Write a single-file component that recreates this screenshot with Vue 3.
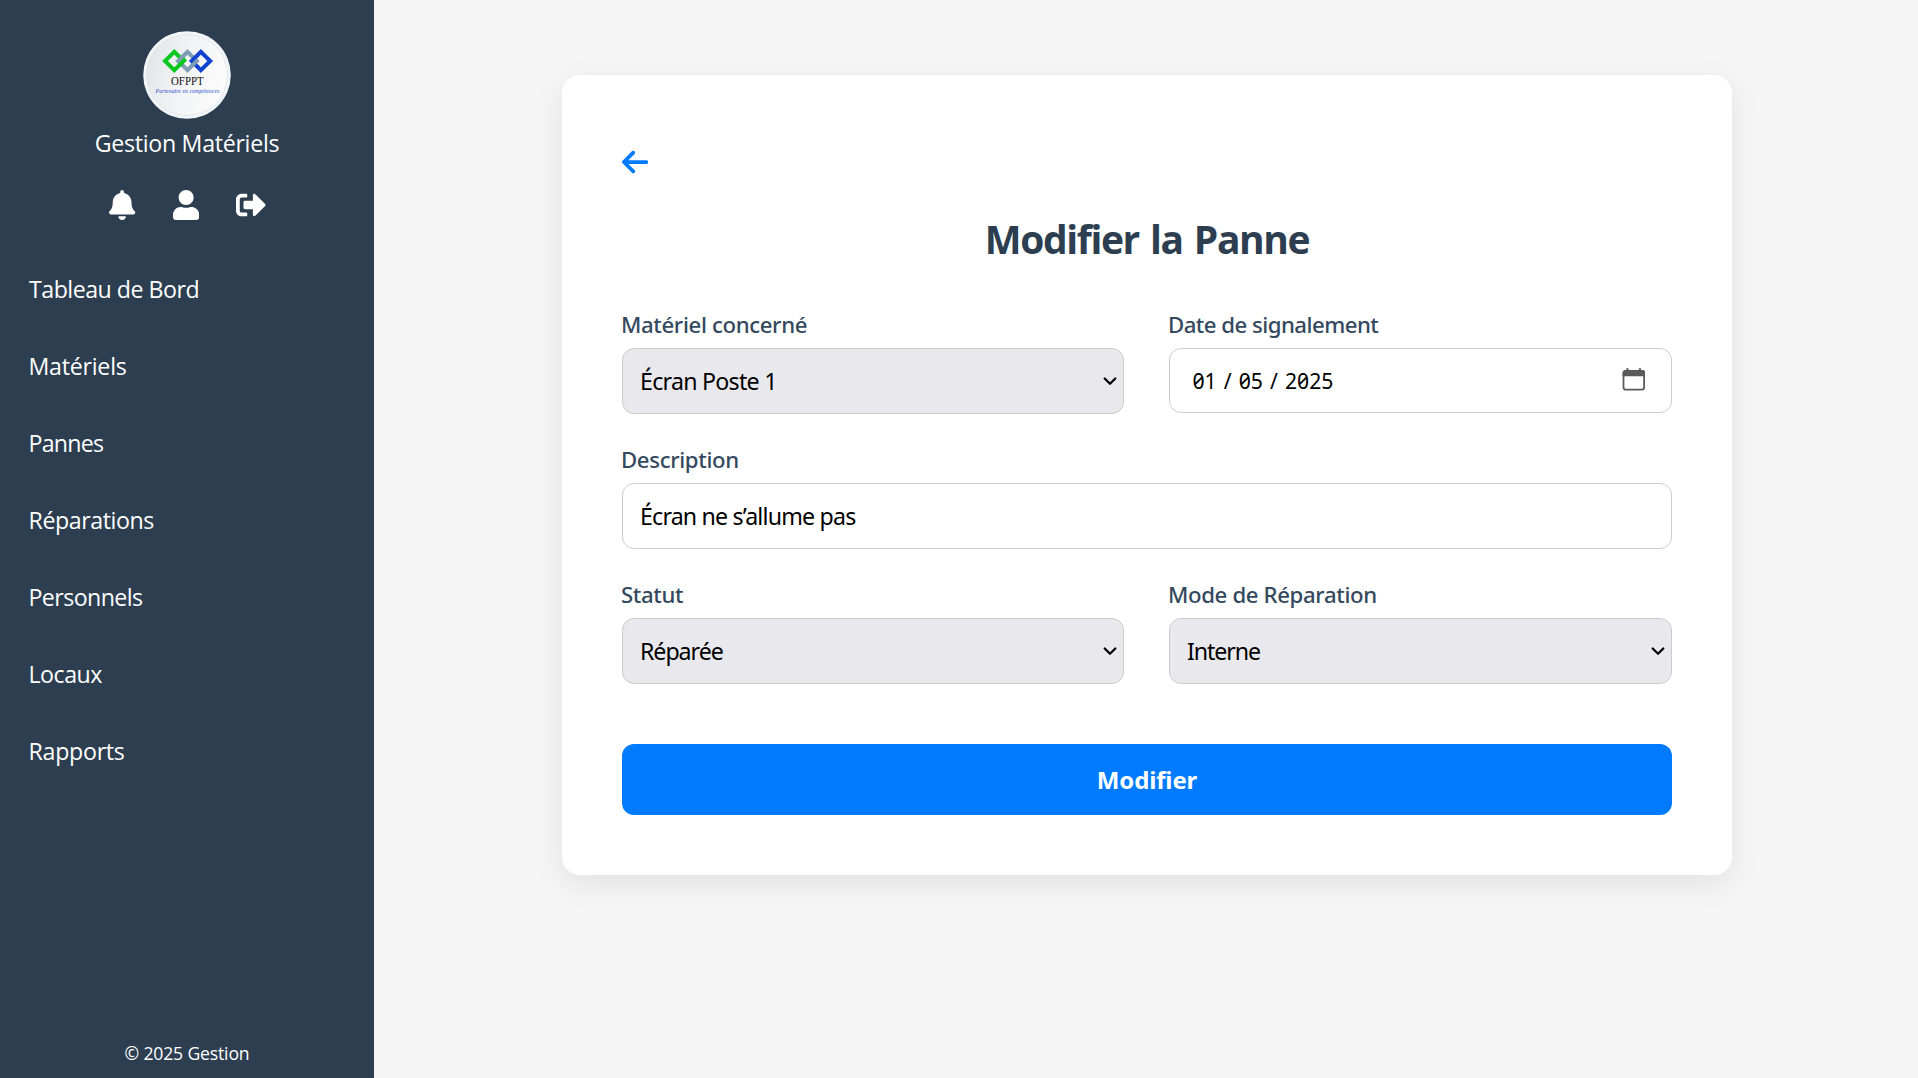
<script setup>
import { ref } from 'vue'

const links = [
  { label: 'Tableau de Bord', tracking: -0.5 },
  { label: 'Matériels', tracking: -0.25 },
  { label: 'Pannes', tracking: -0.75 },
  { label: 'Réparations', tracking: -0.42 },
  { label: 'Personnels', tracking: -0.58 },
  { label: 'Locaux', tracking: -0.5 },
  { label: 'Rapports', tracking: -0.27 },
]
const description = ref('Écran ne s’allume pas')
</script>

<template>
  <div class="app">
    <aside class="sidebar">
      <svg class="logo" viewBox="0 0 88 88">
        <defs>
          <linearGradient id="disc" x1="0" y1="0" x2="1" y2="0.3">
            <stop offset="0" stop-color="#dfe3e6" />
            <stop offset="0.5" stop-color="#f1f2f4" />
            <stop offset="1" stop-color="#fbfbfb" />
          </linearGradient>
        </defs>
        <circle cx="44" cy="44" r="43.8" fill="#f3f6f8" />
        <circle cx="44" cy="44" r="40.5" fill="url(#disc)" stroke="#dde3e7" stroke-width="0.8" />
        <g fill="none" stroke-width="4">
          <path d="M44.5 20.8L53.7 30L44.5 39.2L35.3 30Z" stroke="#7f9db5" />
          <path d="M38.5 28L31.3 20.8L22 30L31.3 39.2L41.6 28.9" stroke="#0bc81e" />
          <path d="M48.7 30L57.9 20.8L67.2 30L57.9 39.2Z" stroke="#1044d0" />
          <path d="M42.5 22.8L35.3 30L38 32.7" stroke="#7f9db5" />
          <path d="M36 34.5L42.6 27.9" stroke="#0bc81e" />
          <path d="M48 35.7L54.6 29.1" stroke="#7f9db5" />
        </g>
        <text x="44.3" y="53.7" class="logo-name" textLength="32.5" lengthAdjust="spacingAndGlyphs">OFPPT</text>
        <text x="44.6" y="62" class="logo-motto" textLength="64" lengthAdjust="spacingAndGlyphs">Partenaire en compétences</text>
      </svg>
      <div class="brand">Gestion Matériels</div>
      <div class="actions">
        <svg width="26.25" height="30" viewBox="0 0 448 512"><path d="M224 512c35.32 0 63.97-28.65 63.97-64H160.03c0 35.35 28.65 64 63.97 64zm215.39-149.71c-19.32-20.76-55.47-51.99-55.47-154.29 0-77.7-54.48-139.9-127.94-155.16V32c0-17.67-14.32-32-31.98-32s-31.98 14.33-31.98 32v20.84C118.56 68.1 64.08 130.3 64.08 208c0 102.3-36.15 133.53-55.47 154.29-6 6.45-8.66 14.16-8.61 21.71.11 16.4 12.98 32 32.1 32h383.8c19.12 0 32-15.6 32.1-32 .05-7.55-2.61-15.27-8.61-21.71z" /></svg>
        <svg width="26.25" height="30" viewBox="0 0 448 512"><path d="M224 256c70.7 0 128-57.3 128-128S294.7 0 224 0 96 57.3 96 128s57.3 128 128 128zm89.6 32h-16.7c-22.2 10.2-46.9 16-72.9 16s-50.6-5.8-72.9-16h-16.7C60.2 288 0 348.2 0 422.4V464c0 26.5 21.5 48 48 48h352c26.5 0 48-21.5 48-48v-41.6c0-74.2-60.2-134.4-134.4-134.4z" /></svg>
        <svg width="30" height="30" viewBox="0 0 512 512"><path d="M497 273L329 441c-15 15-41 4.5-41-17v-96H152c-13.3 0-24-10.7-24-24v-96c0-13.3 10.7-24 24-24h136V88c0-21.4 25.9-32 41-17l168 168c9.3 9.4 9.3 24.6 0 34zM192 436v-40c0-6.6-5.4-12-12-12H96c-17.7 0-32-14.3-32-32V160c0-17.7 14.3-32 32-32h84c6.6 0 12-5.4 12-12V76c0-6.6-5.4-12-12-12H96c-53 0-96 43-96 96v192c0 53 43 96 96 96h84c6.6 0 12-5.4 12-12z" /></svg>
      </div>
      <nav class="menu">
        <a v-for="link in links" :key="link.label" :style="{ letterSpacing: link.tracking + 'px' }">{{ link.label }}</a>
      </nav>
      <footer class="copyright">© 2025 Gestion</footer>
    </aside>

    <main class="content">
      <section class="card">
        <svg class="back" width="26.25" height="30" viewBox="0 0 448 512"><path d="M9.4 233.4c-12.5 12.5-12.5 32.8 0 45.3l160 160c12.5 12.5 32.8 12.5 45.3 0s12.5-32.8 0-45.3L109.2 288 416 288c17.7 0 32-14.3 32-32s-14.3-32-32-32l-306.7 0L214.6 118.6c12.5-12.5 12.5-32.8 0-45.3s-32.8-12.5-45.3 0l-160 160z" /></svg>
        <h1>Modifier la Panne</h1>
        <form class="form" @submit.prevent>
          <div class="field">
            <label>Matériel concerné</label>
            <div class="select-box">
              <select class="control poste"><option>Écran Poste 1</option></select>
              <svg class="chevron" width="14" height="9" viewBox="0 0 14 9"><path d="M1.7 1.5L7 6.8L12.3 1.5" /></svg>
            </div>
          </div>
          <div class="field">
            <label class="tight">Date de signalement</label>
            <div class="control date">
              <span>01</span><i>/</i><span>05</span><i>/</i><span>2025</span>
              <svg class="calendar" width="24" height="23" viewBox="0 0 24 23">
                <rect x="1.5" y="3" width="20.6" height="18.6" rx="2" fill="none" stroke="#5b5b5b" stroke-width="1.8" />
                <path d="M0.6 8.3V4.5Q0.6 2 3 2H20.5Q23 2 23 4.5V8.3ZM4.3 0.2H6.5V3H4.3ZM16.8 0.2H19V3H16.8Z" fill="#5b5b5b" />
              </svg>
            </div>
          </div>
          <div class="field wide">
            <label>Description</label>
            <input v-model="description" class="control desc" type="text" spellcheck="false" />
          </div>
          <div class="field">
            <label>Statut</label>
            <div class="select-box">
              <select class="control statut"><option>Réparée</option></select>
              <svg class="chevron" width="14" height="9" viewBox="0 0 14 9"><path d="M1.7 1.5L7 6.8L12.3 1.5" /></svg>
            </div>
          </div>
          <div class="field">
            <label>Mode de Réparation</label>
            <div class="select-box">
              <select class="control mode"><option>Interne</option></select>
              <svg class="chevron" width="14" height="9" viewBox="0 0 14 9"><path d="M1.7 1.5L7 6.8L12.3 1.5" /></svg>
            </div>
          </div>
          <button class="submit wide" type="submit">Modifier</button>
        </form>
      </section>
    </main>
  </div>
</template>

<style>
body {
  margin: 0;
}
</style>

<style scoped>
* {
  box-sizing: border-box;
}
.app {
  display: flex;
  height: 1078px;
  overflow: hidden;
  background: #f5f5f5;
  font-family: "Open Sans", "Noto Sans", sans-serif;
}
.sidebar {
  display: flex;
  flex: none;
  flex-direction: column;
  align-items: center;
  width: 374px;
  padding: 31px 0 9px;
  background: #2c3e50;
  color: #fff;
}
.logo {
  flex: none;
  width: 88px;
  height: 88px;
}
.logo-name {
  fill: #111;
  font: 11.5px "Liberation Serif", serif;
  text-anchor: middle;
}
.logo-motto {
  fill: #2f52cf;
  font: italic 6.2px "Liberation Serif", serif;
  text-anchor: middle;
}
.brand {
  margin-top: 8px;
  font-size: 23.2px;
  line-height: 32px;
  letter-spacing: -0.3px;
}
.actions {
  display: flex;
  gap: 37px;
  margin-top: 31px;
  padding-left: 1px;
  fill: #fff;
}
.menu {
  display: flex;
  flex-direction: column;
  align-self: stretch;
  margin-top: 30.5px;
  padding-left: 28.5px;
}
.menu a {
  font-size: 23.2px;
  line-height: 77px;
}
.menu a:first-child {
  padding-left: 0.5px;
}
.copyright {
  margin-top: auto;
  font-size: 17.6px;
  line-height: 32px;
  letter-spacing: -0.16px;
}
.content {
  flex: 1;
  padding: 75px 0 0 188px;
}
.card {
  display: flex;
  flex-direction: column;
  width: 1170px;
  height: 800px;
  padding: 72px 60px 60px;
  border-radius: 18px;
  background: #fff;
  box-shadow: 0 9px 30px rgba(0, 0, 0, 0.08);
}
.back {
  flex: none;
  fill: #007bff;
}
h1 {
  margin: 35px 0 43px;
  color: #2c3e50;
  font-size: 39px;
  font-weight: 700;
  line-height: 54px;
  letter-spacing: -1.4px;
  word-spacing: 2.4px;
  text-align: center;
}
.form {
  display: grid;
  grid-template-columns: 502px 503px;
  gap: 30px 45px;
}
.wide {
  grid-column: 1 / -1;
}
label {
  display: block;
  margin: 1px 0 8px -1px;
  color: #34495e;
  font-family: "Noto Sans", sans-serif;
  font-size: 22.2px;
  font-weight: 500;
  line-height: 30px;
  letter-spacing: -0.36px;
}
label.tight {
  letter-spacing: -0.52px;
}
.select-box {
  position: relative;
}
.control {
  display: block;
  width: 100%;
  height: 66px;
  margin: 0;
  padding: 0 17px;
  border: 1px solid #ccc;
  border-radius: 12px;
  outline: none;
  background: #fff;
  color: #000;
  font-family: "Noto Sans", sans-serif;
  font-size: 23.2px;
}
select.control {
  appearance: none;
  background: #e9e9ed;
}
.poste {
  letter-spacing: -0.75px;
}
.desc {
  letter-spacing: -0.82px;
}
.statut {
  letter-spacing: -1.05px;
}
.mode {
  letter-spacing: -1.1px;
}
.chevron {
  position: absolute;
  top: 29px;
  right: 7px;
  fill: none;
  stroke: #000;
  stroke-width: 2.2;
  stroke-linecap: round;
  stroke-linejoin: round;
}
.control.date {
  display: flex;
  align-items: center;
  height: 65px;
  padding: 0 25px 1px 22.5px;
  font-size: 21.2px;
  font-feature-settings: "zero";
}
.date i {
  width: 22px;
  font-style: normal;
  text-align: center;
}
.calendar {
  margin: -2px 0 0 auto;
}
.submit {
  height: 71px;
  margin-top: 30px;
  padding: 0;
  border: 0;
  border-radius: 12px;
  background: #007bff;
  color: #fff;
  font: 700 24px "Noto Sans", sans-serif;
  letter-spacing: -0.14px;
}
</style>
